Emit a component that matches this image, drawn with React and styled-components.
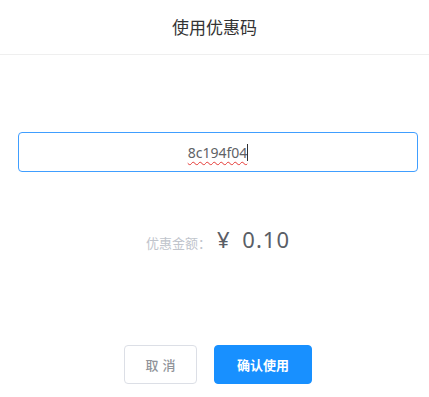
import React from 'react';
import styled, { createGlobalStyle } from 'styled-components';

const GlobalStyle = createGlobalStyle`
  html, body {
    margin: 0;
    padding: 0;
    background: #fff;
  }
  body {
    font-family: "Noto Sans", "Noto Sans CJK SC", sans-serif;
  }
`;

const Dialog = styled.div`
  width: 429px;
  height: 397px;
  background: #fff;
  display: flex;
  flex-direction: column;
`;

const Header = styled.div`
  height: 55px;
  border-bottom: 1px solid #efefef;
  display: flex;
  align-items: center;
  justify-content: center;
  font-size: 17px;
  color: #333;
  box-sizing: border-box;
  padding-bottom: 1px;
`;

const Body = styled.div`
  padding: 77px 11px 0 18px;
  display: flex;
  flex-direction: column;
`;

const CodeInput = styled.div`
  height: 40px;
  box-sizing: border-box;
  border: 1px solid #409eff;
  border-radius: 4px;
  display: flex;
  align-items: center;
  justify-content: center;
  font-size: 14px;
  color: #606266;
`;

const Typed = styled.span`
  text-decoration: underline wavy #e53935;
  text-decoration-thickness: 1px;
  text-underline-offset: 3px;
`;

const Caret = styled.span`
  display: inline-block;
  width: 1px;
  height: 17px;
  background: #303133;
`;

const AmountRow = styled.div`
  margin-top: 52px;
  display: flex;
  align-items: baseline;
  justify-content: center;
`;

const Label = styled.span`
  font-size: 13px;
  color: #c0c4cc;
`;

const Amount = styled.span`
  font-size: 22px;
  color: #5a5e66;
  margin-left: 6px;
  letter-spacing: 1px;
  word-spacing: 5px;
`;

const Footer = styled.div`
  margin-top: 91px;
  display: flex;
  justify-content: center;
  gap: 17px;
`;

const Button = styled.button`
  height: 39px;
  padding: 0;
  border-radius: 4px;
  font-family: inherit;
  font-size: 13px;
  cursor: pointer;
  width: ${p => (p.$primary ? '98px' : '73px')};
  border: 1px solid ${p => (p.$primary ? '#1890ff' : '#dcdfe6')};
  background: ${p => (p.$primary ? '#1890ff' : '#fff')};
  color: ${p => (p.$primary ? '#fff' : '#909399')};
  font-weight: ${p => (p.$primary ? 700 : 500)};
  letter-spacing: ${p => (p.$primary ? '0' : '4px')};
  text-indent: ${p => (p.$primary ? '0' : '4px')};
`;

export default function App() {
  return (
    <>
      <GlobalStyle />
      <Dialog>
        <Header>使用优惠码</Header>
        <Body>
          <CodeInput>
            <Typed>8c194f04</Typed>
            <Caret />
          </CodeInput>
          <AmountRow>
            <Label>优惠金额：</Label>
            <Amount>¥ 0.10</Amount>
          </AmountRow>
          <Footer>
            <Button>取消</Button>
            <Button $primary>确认使用</Button>
          </Footer>
        </Body>
      </Dialog>
    </>
  );
}
